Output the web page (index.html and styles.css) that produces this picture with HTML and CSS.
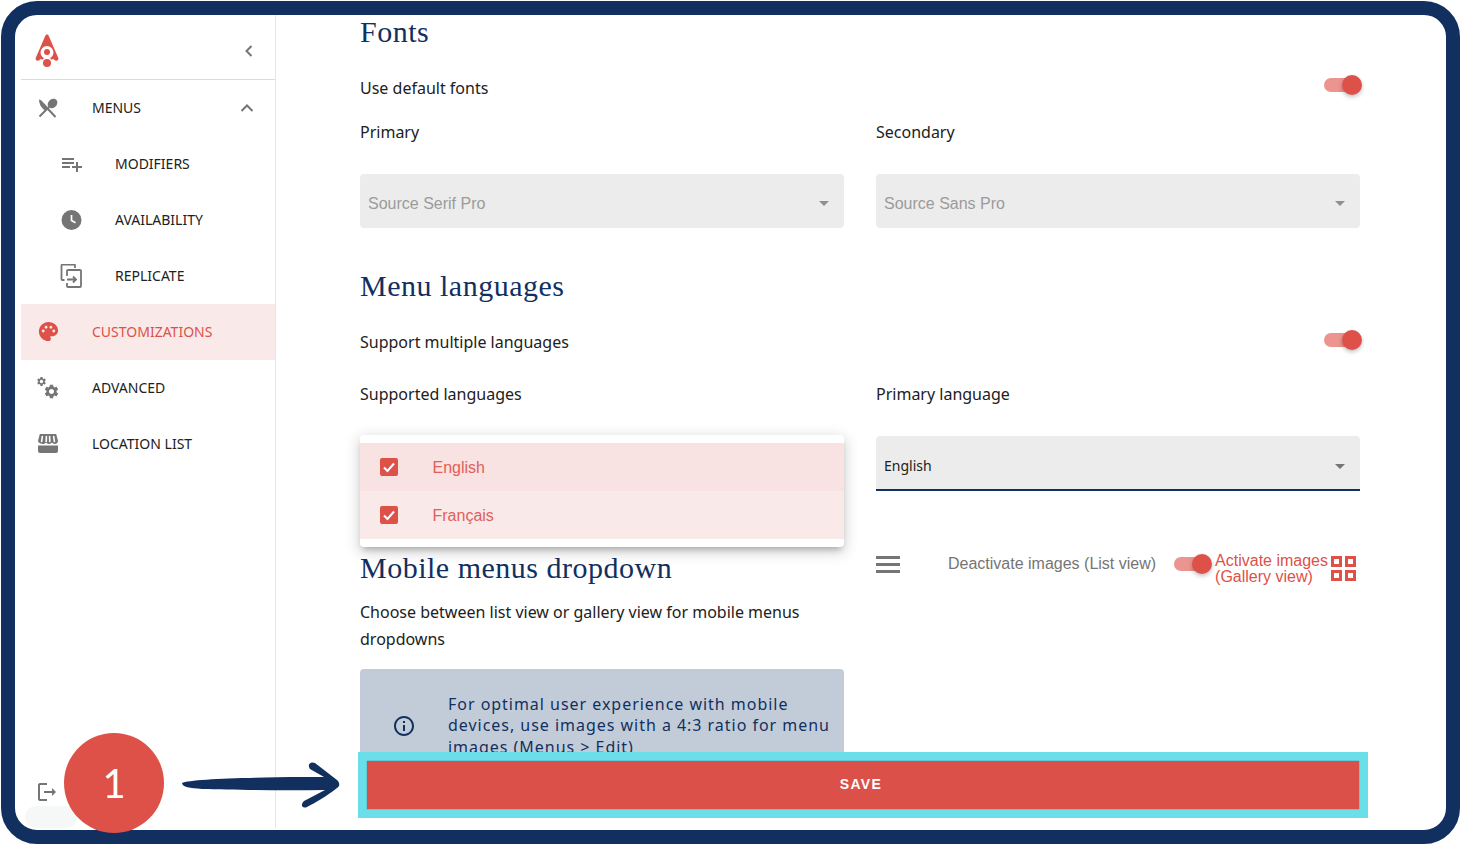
FILE: index.html
```html
<!DOCTYPE html>
<html lang="en">
 <head>
   <title>Customizations</title>
   <meta charset="utf-8"/>
   <link rel="stylesheet" href="styles.css">
 </head>

 <body>
   <svg class="defs" width="0" height="0">
      <symbol id="gear" viewBox="0 0 24 24"><path d="M19.14 12.94c.04-.3.06-.61.06-.94 0-.32-.02-.64-.07-.94l2.03-1.58c.18-.14.23-.41.12-.61l-1.92-3.32c-.12-.22-.37-.29-.59-.22l-2.39.96c-.5-.38-1.03-.7-1.62-.94l-.36-2.54c-.04-.24-.24-.41-.48-.41h-3.84c-.24 0-.43.17-.47.41l-.36 2.54c-.59.24-1.13.57-1.62.94l-2.39-.96c-.22-.08-.47 0-.59.22L2.74 8.87c-.12.21-.08.47.12.61l2.03 1.58c-.05.3-.09.63-.09.94s.02.64.07.94l-2.03 1.58c-.18.14-.23.41-.12.61l1.92 3.32c.12.22.37.29.59.22l2.39-.96c.5.38 1.03.7 1.62.94l.36 2.54c.05.24.24.41.48.41h3.84c.24 0 .44-.17.47-.41l.36-2.54c.59-.24 1.13-.56 1.62-.94l2.39.96c.22.08.47 0 .59-.22l1.92-3.32c.12-.22.07-.47-.12-.61l-2.01-1.58zM12 15.6c-1.98 0-3.6-1.62-3.6-3.6s1.62-3.6 3.6-3.6 3.6 1.62 3.6 3.6-1.62 3.6-3.6 3.6z"/></symbol>
   </svg>

   <div id="frame">
      <aside id="sidebar">
         <div class="side_head">
            <svg class="logo" width="24" height="34" viewBox="0 0 24 34">
               <path d="M12 0.500c.9 0 1.500.7 1.900 1.700l9.300 21.600c.7 1.600-.4 3-2 2.900-1.300-.1-2.300-.7-3-1.900-1.100 1-3.500 1.600-6.200 1.600s-5.100-.6-6.200-1.600c-.7 1.200-1.700 1.800-3 1.900-1.600.1-2.700-1.300-2-2.900l9.300-21.600c.4-1 1-1.700 1.900-1.700z" fill="#dd5149"/>
               <circle cx="12" cy="18.500" r="6.500" fill="#fff"/>
               <circle cx="12" cy="18" r="3" fill="#dd5149"/>
               <circle cx="12" cy="28.500" r="5.300" fill="#fff"/>
               <circle cx="12" cy="29" r="4" fill="#dd5149"/>
            </svg>
            <svg class="head_arrow" width="10" height="14" viewBox="0 0 10 14"><path d="M7.500 2L2.500 7l5 5" fill="none" stroke="#757575" stroke-width="2"/></svg>
         </div>

         <nav id="gnb">
            <a class="item">
               <span class="ico">
                  <svg width="22" height="22" viewBox="0 0 22 22" fill="#757575">
                     <path d="M3 3.500l15.500 16.500" stroke="#757575" stroke-width="2"/>
                     <path d="M2 2l8.500 9-2.500 2.500C4 11 2 7 2 2z"/>
                     <path d="M2.500 19.500L12 10" stroke="#757575" stroke-width="2"/>
                     <ellipse cx="15.500" cy="6.500" rx="4.300" ry="5.300" transform="rotate(45 15.500 6.500)"/>
                  </svg>
               </span>
               <span class="txt">MENUS</span>
               <svg class="item_arrow" width="14" height="10" viewBox="0 0 14 10"><path d="M1.500 8L7 2.500 12.500 8" fill="none" stroke="#757575" stroke-width="2"/></svg>
            </a>
            <a class="item sub">
               <span class="ico"><svg width="24" height="24" viewBox="0 0 24 24" fill="#757575"><path d="M14 10H2v2h12v-2zm0-4H2v2h12V6zm4 8v-4h-2v4h-4v2h4v4h2v-4h4v-2h-4zM2 16h8v-2H2v2z"/></svg></span>
               <span class="txt">MODIFIERS</span>
            </a>
            <a class="item sub">
               <span class="ico">
                  <svg width="24" height="24" viewBox="0 0 24 24">
                     <circle cx="11.500" cy="12" r="10" fill="#757575"/>
                     <path d="M11.500 7v5.500l4 2.300" fill="none" stroke="#fff" stroke-width="1.700"/>
                  </svg>
               </span>
               <span class="txt">AVAILABILITY</span>
            </a>
            <a class="item sub">
               <span class="ico">
                  <svg width="24" height="24" viewBox="0 0 24 24" fill="none" stroke="#757575" stroke-width="1.800">
                     <path d="M4.500 16H2.500a1 1 0 0 1-1-1V1.500a1 1 0 0 1 1-1H14a1 1 0 0 1 1 1V4"/>
                     <path d="M7 12V7a1 1 0 0 1 1-1h12a1 1 0 0 1 1 1v15a1 1 0 0 1-1 1H8a1 1 0 0 1-1-1v-3"/>
                     <path d="M7 15.500h9M13 12.500l3 3-3 3"/>
                  </svg>
               </span>
               <span class="txt">REPLICATE</span>
            </a>
            <a class="item on">
               <span class="ico"><svg width="23" height="23" viewBox="0 0 24 24" fill="#dd5149"><path d="M12 2C6.490 2 2 6.490 2 12s4.490 10 10 10c1.380 0 2.500-1.120 2.500-2.500 0-.61-.23-1.200-.64-1.670-.08-.1-.13-.21-.13-.33 0-.28.22-.5.5-.5H16c3.310 0 6-2.690 6-6 0-4.960-4.490-9-10-9zm5.500 11c-.83 0-1.500-.67-1.500-1.500s.67-1.500 1.500-1.500 1.500.67 1.500 1.500-.67 1.500-1.500 1.500zm-3-4c-.83 0-1.500-.67-1.500-1.500S13.670 6 14.500 6s1.500.67 1.500 1.500S15.330 9 14.500 9zM5 11.500c0-.83.67-1.500 1.500-1.500s1.500.67 1.500 1.500S7.330 13 6.500 13 5 12.330 5 11.500zm6-4c0 .83-.67 1.500-1.500 1.500S8 8.330 8 7.500 8.670 6 9.500 6s1.500.67 1.500 1.500z"/></svg></span>
               <span class="txt">CUSTOMIZATIONS</span>
            </a>
            <a class="item">
               <span class="ico">
                  <svg width="24" height="24" viewBox="0 0 24 24" fill="#757575">
                     <use href="#gear" x="0" y="0" width="11" height="11"/>
                     <use href="#gear" x="7" y="7" width="17" height="17"/>
                  </svg>
               </span>
               <span class="txt">ADVANCED</span>
            </a>
            <a class="item">
               <span class="ico">
                  <svg width="24" height="24" viewBox="0 0 24 24">
                     <path d="M3.800 2h16.400l1.800 7c0 2-1.600 3-3.300 3-1.200 0-2.100-.6-2.700-1.400-.6.8-1.600 1.400-2.700 1.400h-.6c-1.100 0-2.100-.6-2.700-1.400-.6.8-1.500 1.400-2.700 1.400C5.600 12 2 11 2 9z" fill="#757575"/>
                     <path d="M6.300 4.500L5.600 9.500M10.400 4.500L10.200 9.500M13.600 4.500L13.800 9.500M17.700 4.500L18.400 9.500" stroke="#fff" stroke-width="1.600" stroke-linecap="round"/>
                     <path d="M2 13.500h20V19a2 2 0 0 1-2 2H4a2 2 0 0 1-2-2z" fill="#757575"/>
                  </svg>
               </span>
               <span class="txt">LOCATION LIST</span>
            </a>
         </nav>

         <div class="side_foot">
            <svg width="24" height="24" viewBox="0 0 24 24" fill="#757575"><path d="M5 5h7V3H5c-1.100 0-2 .9-2 2v14c0 1.100.9 2 2 2h7v-2H5V5zm16 7l-4-4v3H9v2h8v3l4-4z"/></svg>
         </div>
         <div class="side_pill"></div>
      </aside>

      <main id="content">
         <h2 class="title">Fonts</h2>
         <div class="switch_row">
            <p>Use default fonts</p>
            <span class="switch"></span>
         </div>
         <div class="cols">
            <div class="field">
               <label>Primary</label>
               <div class="select off">Source Serif Pro</div>
            </div>
            <div class="field">
               <label>Secondary</label>
               <div class="select off">Source Sans Pro</div>
            </div>
         </div>

         <h2 class="title lang">Menu languages</h2>
         <div class="switch_row lang_row">
            <p>Support multiple languages</p>
            <span class="switch"></span>
         </div>
         <div class="cols lang_cols">
            <div class="field multi">
               <label>Supported languages</label>
               <div class="select blank"></div>
               <ul class="menu">
                  <li class="picked">
                     <span class="check"><svg width="14" height="14" viewBox="0 0 14 14"><path d="M2 7.500l3.500 3.500 6.500-7.500" fill="none" stroke="#fff" stroke-width="2"/></svg></span>
                     English
                  </li>
                  <li>
                     <span class="check"><svg width="14" height="14" viewBox="0 0 14 14"><path d="M2 7.500l3.500 3.500 6.500-7.500" fill="none" stroke="#fff" stroke-width="2"/></svg></span>
                     Français
                  </li>
               </ul>
            </div>
            <div class="field">
               <label>Primary language</label>
               <div class="select focus">English</div>
            </div>

            <section class="mobile">
               <h2 class="title">Mobile menus dropdown</h2>
               <p class="desc">Choose between list view or gallery view for mobile menus dropdowns</p>
               <div class="alert">
                  <svg width="24" height="24" viewBox="0 0 24 24" fill="#12305f"><path d="M11 7h2v2h-2zm0 4h2v6h-2zm1-9C6.480 2 2 6.480 2 12s4.480 10 10 10 10-4.480 10-10S17.520 2 12 2zm0 18c-4.410 0-8-3.590-8-8s3.590-8 8-8 8 3.590 8 8-3.590 8-8 8z"/></svg>
                  <p>For optimal user experience with mobile devices, use images with a 4:3 ratio for menu images (Menus &gt; Edit)</p>
               </div>
            </section>
            <div class="view_row">
               <span class="bars"><i></i><i></i><i></i></span>
               <span class="view_off">Deactivate images (List view)</span>
               <span class="switch"></span>
               <span class="view_on">Activate images (Gallery view)</span>
               <span class="grid_ico"><i></i><i></i><i></i><i></i></span>
            </div>
         </div>
      </main>

      <div class="save_wrap"><button class="save">SAVE</button></div>
   </div>

   <!-- annotation over the screenshot -->
   <div class="step">1</div>
   <svg class="pointer" width="160" height="48" viewBox="0 0 160 48">
      <path d="M0 21C8 17 60 15.500 120 15L142 15L128 7C125 3 128-1 133 1L155 18C158 21 158 24 155 26C145 34 133 41 125 45C120 47 118 43 122 39L143 28C100 28.500 50 28 20 27C8 26 0 25 0 21Z" fill="#12305f"/>
   </svg>
 </body>
</html>
```

FILE: styles.css
```css
/*####### reset #######*/
*{margin:0; padding:0; box-sizing:border-box;}
html,body{width:1460px; height:844px; overflow:hidden; background-color:#fff;}
body{font-family:"Noto Sans", arial, sans-serif; color:#212121; position:relative;}
.defs{position:absolute;}

/*####### frame #######*/
#frame{display:flex; position:relative; width:1459px; height:843px; margin:1px 0 0 1px; border:14px solid #12305f; border-radius:36px; background-color:#fff; overflow:hidden;}

/*####### sidebar #######*/
#sidebar{display:flex; flex-direction:column; flex:none; width:261px; height:813px; padding-left:6px; border-right:1px solid #e6e6e6;}
.side_head{display:flex; align-items:center; justify-content:space-between; flex:none; height:65px; padding:8px 21px 0 14px; border-bottom:1px solid #dcdcdc;}
.item{display:flex; align-items:center; height:56px; padding:0 0 1px 15px; font-size:14px; color:#212121;}
.item .ico{display:flex; align-items:center; justify-content:center; flex:none; width:24px; height:24px; margin-right:32px;}
.item.sub{padding-left:39px;}
.item.sub .ico{margin-right:31px;}
.item.on{background-color:#f9e9e8; color:#dd5149;}
.item_arrow{margin-left:auto; margin-right:21px;}
.side_foot{display:flex; margin-top:auto; padding:4px 0 0 14px; height:30px;}
.side_pill{width:52px; height:22px; margin-left:4px; border-radius:12px; background-color:#f6f8f7;}

/*####### content #######*/
#content{flex:1; min-width:0; height:815px; padding:0 85px 0 84px; overflow:hidden;}
.title{height:34px; font-family:"Liberation Serif", serif; font-size:30px; line-height:33px; font-weight:400; color:#12305f; letter-spacing:.5px;}
.title.lang{margin-top:41px;}
.switch_row{display:flex; align-items:center; justify-content:space-between; height:28px; margin-top:25px; font-size:16px;}
.cols{display:grid; grid-template-columns:484px 484px; column-gap:32px; align-items:start; margin-top:16px;}
.lang_cols{margin-top:24px;}
.field{position:relative;}
.field label{display:block; height:28px; margin-bottom:28px; font-size:16px; line-height:28px;}
.select{position:relative; height:54px; padding:0 8px; border-radius:4px 4px 0 0; background-color:#ececec; font-family:"Liberation Sans", sans-serif; font-size:16px; line-height:60px;}
.select:after{content:""; position:absolute; right:15px; top:27px; border:5px solid transparent; border-top-color:#757575; border-bottom:0;}
.select.off{height:54px; border-radius:4px; color:#9b9b9b;}
.select.off:after{border-top-color:#8f8f8f;}
.select.focus{height:55px; border-bottom:2px solid #12305f; font-family:"Noto Sans", sans-serif; font-size:14px; line-height:60px;}
.select.focus:after{top:28px;}
.select.blank{background-color:#fff;}
.select.blank:after{display:none;}

/* dropdown that is open over the field */
.menu{position:absolute; left:0; top:55px; width:484px; padding:8px 0; border-radius:4px; background-color:#fff; list-style:none; box-shadow:0 5px 6px -3px rgba(0,0,0,.25), 0 4px 14px 2px rgba(0,0,0,.16);}
.menu li{display:flex; align-items:center; height:48px; padding:2px 0 0 19.500px; background-color:#fae9e9; color:#e0605a; font-family:"Liberation Sans", sans-serif; font-size:16px;}
.menu li.picked{background-color:#f8e2e2;}
.check{display:flex; align-items:center; justify-content:center; flex:none; width:18px; height:18px; margin:-2px 35px 0 0; border-radius:2px; background-color:#dd5149;}

.mobile{grid-column:1; margin-top:60px;}
.desc{margin-top:14px; font-size:16px; line-height:27px;}
.alert{display:flex; align-items:center; gap:32px; height:114px; margin-top:16px; padding:0 8px 0 32px; border-radius:4px; background-color:#c2ccd9; color:#12305f; font-size:16px; line-height:21.500px; letter-spacing:.97px;}
.alert svg{flex:none;}

/* list / gallery toggle */
.view_row{grid-column:2; grid-row:2; display:flex; align-items:center; height:36px; margin-top:55px; font-family:"Liberation Sans", sans-serif; font-size:16px; line-height:16px;}
.bars{display:flex; flex-direction:column; gap:4px; flex:none; width:24px; margin-right:48px;}
.bars i{display:block; height:3px; background-color:#757575;}
.view_off{flex:none; color:#757575; margin-right:18px;}
.view_on{flex:none; width:116px; margin:10px 0 0 4px; color:#dd5149;}
.grid_ico{display:grid; grid-template-columns:11px 11px; gap:3px; flex:none; margin:8px 0 0;}
.grid_ico i{display:block; height:11px; border:3px solid #dd5149;}

.switch{position:relative; display:block; flex:none; width:35px; height:14px; margin-right:2px; border-radius:7px; background-color:#eb9490;}
.switch:after{content:""; position:absolute; right:-3px; top:-3px; width:20px; height:20px; border-radius:50%; background-color:#dd5149; box-shadow:0 2px 4px rgba(0,0,0,.25);}
.switch_row .switch{top:-3px;}
.lang_row .switch{top:-2px;}

/*####### save bar #######*/
.save_wrap{position:absolute; left:343px; top:737px; width:1010px; height:66px; border:9px solid #6adfea; background-color:#db5149;}
.save{display:block; width:100%; height:100%; padding:0 4px 2px 0; border:0; background-color:#db5149; color:#fff; font-family:"Liberation Sans", sans-serif; font-size:14px; font-weight:700; letter-spacing:1.400px; box-shadow:0 0 1px rgba(0,0,0,.5);}

/*####### annotation #######*/
.step{position:absolute; left:64px; top:733px; width:100px; height:100px; border-radius:50%; background-color:#dd5149; color:#fff; font-family:Lato, sans-serif; font-size:40px; line-height:100px; text-align:center;}
.pointer{position:absolute; left:182px; top:762px; overflow:visible;}
```
